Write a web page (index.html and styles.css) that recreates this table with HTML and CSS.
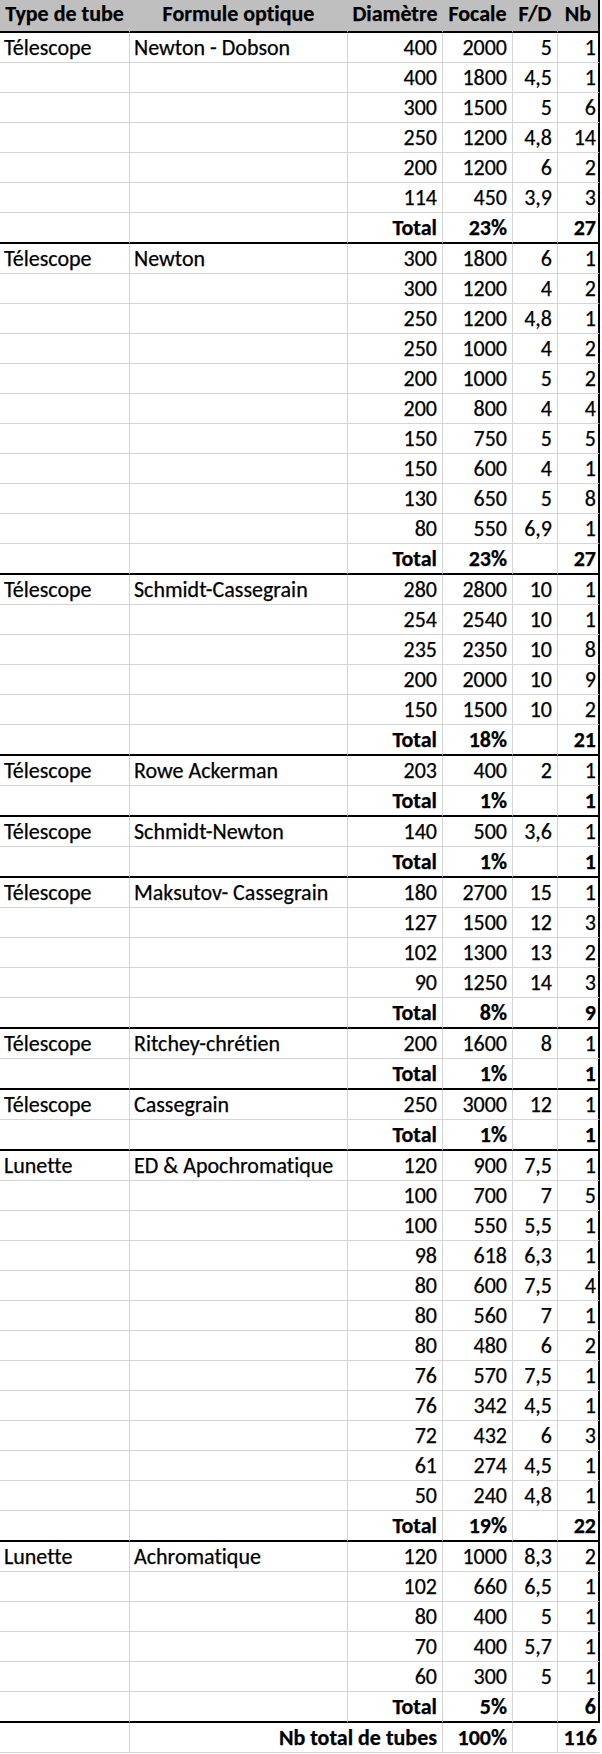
FILE: index.html
```html
<!DOCTYPE html>
<html lang="fr">
<head>
<meta charset="utf-8">
<title>Tubes</title>
<link rel="stylesheet" href="styles.css">
</head>
<body>
<table class="sheet">
<colgroup>
<col class="c1"><col class="c2"><col class="c3"><col class="c4"><col class="c5"><col class="c6">
</colgroup>
<thead>
<tr class="head"><th>Type de tube</th><th>Formule optique</th><th>Diamètre</th><th>Focale</th><th>F/D</th><th>Nb</th></tr>
</thead>
<tbody>
<tr><td>Télescope</td><td>Newton - Dobson</td><td class="n">400</td><td class="n">2000</td><td class="n">5</td><td class="n">1</td></tr>
<tr><td></td><td></td><td class="n">400</td><td class="n">1800</td><td class="n">4,5</td><td class="n">1</td></tr>
<tr><td></td><td></td><td class="n">300</td><td class="n">1500</td><td class="n">5</td><td class="n">6</td></tr>
<tr><td></td><td></td><td class="n">250</td><td class="n">1200</td><td class="n">4,8</td><td class="n">14</td></tr>
<tr><td></td><td></td><td class="n">200</td><td class="n">1200</td><td class="n">6</td><td class="n">2</td></tr>
<tr><td></td><td></td><td class="n">114</td><td class="n">450</td><td class="n">3,9</td><td class="n">3</td></tr>
<tr class="total end"><td></td><td></td><td class="n">Total</td><td class="n">23%</td><td></td><td class="n">27</td></tr>

<tr><td>Télescope</td><td>Newton</td><td class="n">300</td><td class="n">1800</td><td class="n">6</td><td class="n">1</td></tr>
<tr><td></td><td></td><td class="n">300</td><td class="n">1200</td><td class="n">4</td><td class="n">2</td></tr>
<tr><td></td><td></td><td class="n">250</td><td class="n">1200</td><td class="n">4,8</td><td class="n">1</td></tr>
<tr><td></td><td></td><td class="n">250</td><td class="n">1000</td><td class="n">4</td><td class="n">2</td></tr>
<tr><td></td><td></td><td class="n">200</td><td class="n">1000</td><td class="n">5</td><td class="n">2</td></tr>
<tr><td></td><td></td><td class="n">200</td><td class="n">800</td><td class="n">4</td><td class="n">4</td></tr>
<tr><td></td><td></td><td class="n">150</td><td class="n">750</td><td class="n">5</td><td class="n">5</td></tr>
<tr><td></td><td></td><td class="n">150</td><td class="n">600</td><td class="n">4</td><td class="n">1</td></tr>
<tr><td></td><td></td><td class="n">130</td><td class="n">650</td><td class="n">5</td><td class="n">8</td></tr>
<tr><td></td><td></td><td class="n">80</td><td class="n">550</td><td class="n">6,9</td><td class="n">1</td></tr>
<tr class="total end"><td></td><td></td><td class="n">Total</td><td class="n">23%</td><td></td><td class="n">27</td></tr>

<tr><td>Télescope</td><td>Schmidt-Cassegrain</td><td class="n">280</td><td class="n">2800</td><td class="n">10</td><td class="n">1</td></tr>
<tr><td></td><td></td><td class="n">254</td><td class="n">2540</td><td class="n">10</td><td class="n">1</td></tr>
<tr><td></td><td></td><td class="n">235</td><td class="n">2350</td><td class="n">10</td><td class="n">8</td></tr>
<tr><td></td><td></td><td class="n">200</td><td class="n">2000</td><td class="n">10</td><td class="n">9</td></tr>
<tr><td></td><td></td><td class="n">150</td><td class="n">1500</td><td class="n">10</td><td class="n">2</td></tr>
<tr class="total end"><td></td><td></td><td class="n">Total</td><td class="n">18%</td><td></td><td class="n">21</td></tr>

<tr><td>Télescope</td><td>Rowe Ackerman</td><td class="n">203</td><td class="n">400</td><td class="n">2</td><td class="n">1</td></tr>
<tr class="total end"><td></td><td></td><td class="n">Total</td><td class="n">1%</td><td></td><td class="n">1</td></tr>

<tr><td>Télescope</td><td>Schmidt-Newton</td><td class="n">140</td><td class="n">500</td><td class="n">3,6</td><td class="n">1</td></tr>
<tr class="total end"><td></td><td></td><td class="n">Total</td><td class="n">1%</td><td></td><td class="n">1</td></tr>

<tr><td>Télescope</td><td>Maksutov- Cassegrain</td><td class="n">180</td><td class="n">2700</td><td class="n">15</td><td class="n">1</td></tr>
<tr><td></td><td></td><td class="n">127</td><td class="n">1500</td><td class="n">12</td><td class="n">3</td></tr>
<tr><td></td><td></td><td class="n">102</td><td class="n">1300</td><td class="n">13</td><td class="n">2</td></tr>
<tr><td></td><td></td><td class="n">90</td><td class="n">1250</td><td class="n">14</td><td class="n">3</td></tr>
<tr class="total end"><td></td><td></td><td class="n">Total</td><td class="n">8%</td><td></td><td class="n">9</td></tr>

<tr><td>Télescope</td><td>Ritchey-chrétien</td><td class="n">200</td><td class="n">1600</td><td class="n">8</td><td class="n">1</td></tr>
<tr class="total end"><td></td><td></td><td class="n">Total</td><td class="n">1%</td><td></td><td class="n">1</td></tr>

<tr><td>Télescope</td><td>Cassegrain</td><td class="n">250</td><td class="n">3000</td><td class="n">12</td><td class="n">1</td></tr>
<tr class="total end"><td></td><td></td><td class="n">Total</td><td class="n">1%</td><td></td><td class="n">1</td></tr>

<tr><td>Lunette</td><td>ED &amp; Apochromatique</td><td class="n">120</td><td class="n">900</td><td class="n">7,5</td><td class="n">1</td></tr>
<tr><td></td><td></td><td class="n">100</td><td class="n">700</td><td class="n">7</td><td class="n">5</td></tr>
<tr><td></td><td></td><td class="n">100</td><td class="n">550</td><td class="n">5,5</td><td class="n">1</td></tr>
<tr><td></td><td></td><td class="n">98</td><td class="n">618</td><td class="n">6,3</td><td class="n">1</td></tr>
<tr><td></td><td></td><td class="n">80</td><td class="n">600</td><td class="n">7,5</td><td class="n">4</td></tr>
<tr><td></td><td></td><td class="n">80</td><td class="n">560</td><td class="n">7</td><td class="n">1</td></tr>
<tr><td></td><td></td><td class="n">80</td><td class="n">480</td><td class="n">6</td><td class="n">2</td></tr>
<tr><td></td><td></td><td class="n">76</td><td class="n">570</td><td class="n">7,5</td><td class="n">1</td></tr>
<tr><td></td><td></td><td class="n">76</td><td class="n">342</td><td class="n">4,5</td><td class="n">1</td></tr>
<tr><td></td><td></td><td class="n">72</td><td class="n">432</td><td class="n">6</td><td class="n">3</td></tr>
<tr><td></td><td></td><td class="n">61</td><td class="n">274</td><td class="n">4,5</td><td class="n">1</td></tr>
<tr><td></td><td></td><td class="n">50</td><td class="n">240</td><td class="n">4,8</td><td class="n">1</td></tr>
<tr class="total end"><td></td><td></td><td class="n">Total</td><td class="n">19%</td><td></td><td class="n">22</td></tr>

<tr><td>Lunette</td><td>Achromatique</td><td class="n">120</td><td class="n">1000</td><td class="n">8,3</td><td class="n">2</td></tr>
<tr><td></td><td></td><td class="n">102</td><td class="n">660</td><td class="n">6,5</td><td class="n">1</td></tr>
<tr><td></td><td></td><td class="n">80</td><td class="n">400</td><td class="n">5</td><td class="n">1</td></tr>
<tr><td></td><td></td><td class="n">70</td><td class="n">400</td><td class="n">5,7</td><td class="n">1</td></tr>
<tr><td></td><td></td><td class="n">60</td><td class="n">300</td><td class="n">5</td><td class="n">1</td></tr>
<tr class="total end"><td></td><td></td><td class="n">Total</td><td class="n">5%</td><td></td><td class="n">6</td></tr>

<tr class="total grand"><td></td><td class="n" colspan="2">Nb total de tubes</td><td class="n">100%</td><td></td><td class="n">116</td></tr>
</tbody>
</table>
</body>
</html>
```

FILE: styles.css
```css
html, body {
  margin: 0;
  padding: 0;
  background: #ffffff;
}

.sheet {
  width: 600px;
  table-layout: fixed;
  border-collapse: separate;
  border-spacing: 0;
  font-family: Carlito, Calibri, "Liberation Sans", sans-serif;
  font-size: 22px;
  font-variant-ligatures: none;
  -webkit-text-stroke: 0.25px #000000;
  color: #000000;
}

.c1 { width: 130px; }
.c2 { width: 218px; }
.c3 { width: 95px; }
.c4 { width: 70px; }
.c5 { width: 45px; }
.c6 { width: 42px; }

.sheet th,
.sheet td {
  padding: 0 4px;
  line-height: 29px;
  height: 29px;
  box-sizing: content-box;
  white-space: nowrap;
  overflow: hidden;
  vertical-align: bottom;
  border-right: 1px solid #d4d4d4;
  border-bottom: 1px solid #d4d4d4;
  text-align: left;
}

.sheet th {
  background: #bfbfbf;
  font-weight: bold;
  text-align: center;
  line-height: 27px;
  height: 27px;
  padding: 0 0 4px 0;
  border-right: 1px solid #bfbfbf;
  border-bottom: 2px solid #000000;
}

.sheet th:last-child,
.sheet td:last-child {
  border-right: 2px solid #000000;
}

.sheet .n {
  text-align: right;
  padding-right: 5px;
}

.sheet td:last-child.n {
  padding-right: 2px;
}

.total td {
  font-weight: bold;
}

.end td {
  border-bottom: 2px solid #000000;
}

.grand td:last-child {
  border-right: 1px solid #ffffff;
}
```
